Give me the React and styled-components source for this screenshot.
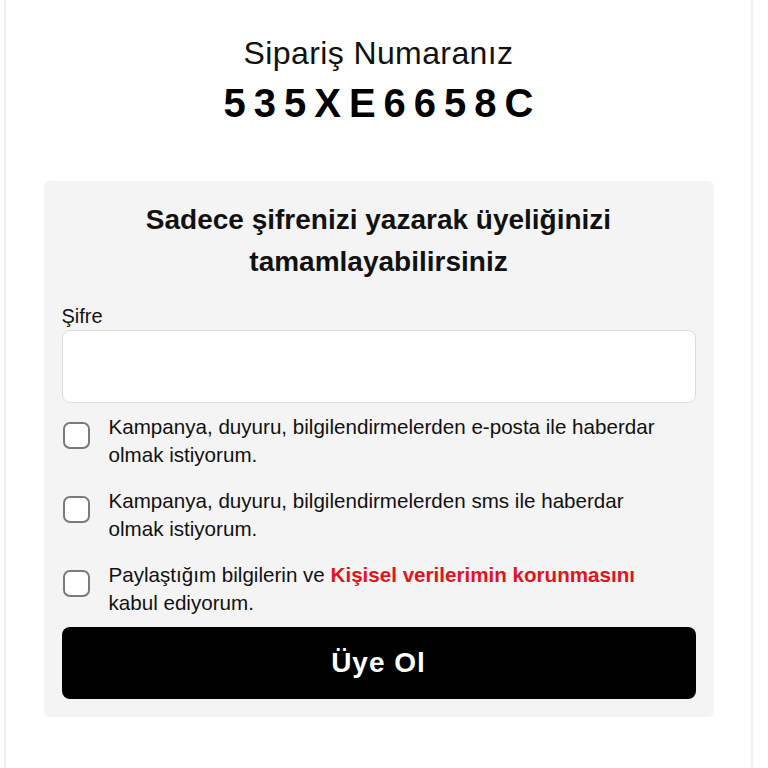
import React, { useState } from "react";
import styled, { createGlobalStyle } from "styled-components";

const GlobalStyle = createGlobalStyle`
  body {
    margin: 0;
    background: #ffffff;
    font-family: "Liberation Sans", Arial, Helvetica, sans-serif;
    color: #111;
  }
  * { box-sizing: border-box; }
`;

const CONSENTS = [
  { id: "email", text: "Kampanya, duyuru, bilgilendirmelerden e-posta ile haberdar olmak istiyorum." },
  { id: "sms", text: "Kampanya, duyuru, bilgilendirmelerden sms ile haberdar olmak istiyorum." },
  { id: "kvkk", before: "Paylaştığım bilgilerin ve ", link: "Kişisel verilerimin korunmasını", after: " kabul ediyorum." },
];

function App() {
  const [checked, setChecked] = useState({});
  const [password, setPassword] = useState("");

  function toggle(id) {
    setChecked(prev => ({ ...prev, [id]: !prev[id] }));
  }

  return (
    <>
      <GlobalStyle />
      <Page>
        <OrderTitle>Sipariş Numaranız</OrderTitle>
        <OrderNumber>535XE6658C</OrderNumber>
        <Card>
          <CardTitle>
            Sadece şifrenizi yazarak üyeliğinizi
            <br />
            tamamlayabilirsiniz
          </CardTitle>
          <Label htmlFor="sifre">Şifre</Label>
          <Input
            id="sifre"
            type="password"
            value={password}
            onChange={e => setPassword(e.target.value)}
          />
          <ConsentList>
            {CONSENTS.map(c => (
              <ConsentRow key={c.id} onClick={() => toggle(c.id)}>
                <Box checked={!!checked[c.id]} />
                <ConsentText>
                  {c.text ? (
                    c.text
                  ) : (
                    <>
                      {c.before}
                      <Link>{c.link}</Link>
                      {c.after}
                    </>
                  )}
                </ConsentText>
              </ConsentRow>
            ))}
          </ConsentList>
          <SubmitBtn>Üye Ol</SubmitBtn>
        </Card>
      </Page>
    </>
  );
}

const Page = styled.div`
  width: 749px;
  min-height: 768px;
  margin-left: 4px;
  padding: 32px 39px 40px;
  border-left: 2px solid #f0f0f0;
  border-right: 2px solid #f0f0f0;
  display: flex;
  flex-direction: column;
  align-items: center;
`;

const OrderTitle = styled.h1`
  margin: 0;
  font-size: 32px;
  font-weight: 400;
  line-height: 42px;
  letter-spacing: 0.4px;
  color: #111;
`;

const OrderNumber = styled.div`
  margin-top: 6px;
  font-size: 40px;
  font-weight: 700;
  line-height: 46px;
  letter-spacing: 8px;
  padding-left: 8px;
  color: #000;
`;

const Card = styled.div`
  width: 670px;
  margin-top: 55px;
  padding: 18px 18px 18px;
  background: #f4f4f4;
  border-radius: 6px;
  display: flex;
  flex-direction: column;
`;

const CardTitle = styled.h2`
  margin: 0;
  text-align: center;
  font-size: 28px;
  font-weight: 700;
  line-height: 42px;
  color: #111;
`;

const Label = styled.label`
  margin-top: 21px;
  font-size: 20px;
  line-height: 24px;
  color: #111;
`;

const Input = styled.input`
  margin-top: 2px;
  width: 100%;
  height: 73px;
  background: #fff;
  border: 1.5px solid #dcdcdc;
  border-radius: 8px;
  padding: 0 16px;
  font-size: 20px;
  outline: none;
`;

const ConsentList = styled.div`
  margin-top: 10px;
  display: flex;
  flex-direction: column;
  gap: 18px;
`;

const ConsentRow = styled.div`
  display: flex;
  align-items: flex-start;
  gap: 19px;
  cursor: pointer;
`;

const Box = styled.span`
  flex: none;
  width: 27px;
  height: 27px;
  margin-top: 9px;
  margin-left: 1px;
  border: 2px solid #7a7a7a;
  border-radius: 7px;
  background: ${p => (p.checked ? "#000" : "#fff")};
`;

const ConsentText = styled.p`
  margin: 0;
  max-width: 552px;
  font-size: 20.6px;
  line-height: 28px;
  color: #111;
`;

const Link = styled.a`
  color: #e3131b;
  font-weight: 700;
  cursor: pointer;
`;

const SubmitBtn = styled.button`
  margin-top: 10px;
  height: 72px;
  width: 100%;
  background: #000;
  color: #fff;
  border: none;
  border-radius: 8px;
  font-family: inherit;
  font-size: 28px;
  font-weight: 700;
  letter-spacing: 1px;
  cursor: pointer;
`;

export default App;
